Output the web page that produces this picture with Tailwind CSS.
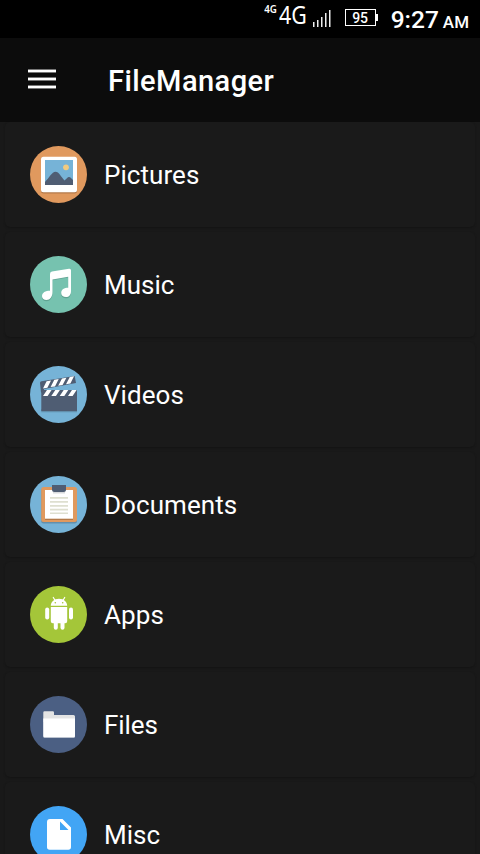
<!DOCTYPE html>
<html lang="en">
<head>
<meta charset="utf-8">
<title>FileManager</title>
<script src="https://cdn.jsdelivr.net/npm/@tailwindcss/browser@4"></script>
</head>
<body class="h-[854px] w-[480px] overflow-hidden bg-[#191919] font-[Roboto,sans-serif] text-white">
<div class="flex h-[854px] flex-col overflow-hidden">
  <div class="flex h-[38px] shrink-0 justify-end bg-black pr-[11px]">
    <span class="mt-[1px] mr-[1px] origin-right scale-x-[0.85] text-[11.5px] leading-[16px] font-semibold whitespace-nowrap font-['Noto_Sans',sans-serif]">4G</span>
    <span class="mr-[6px] origin-right scale-x-[0.82] text-[26px] leading-[29px] whitespace-nowrap -ml-[5px] font-['Noto_Sans',sans-serif]">4G</span>
    <svg class="mt-[9px] mr-[14px] h-[18px] w-[18px]" viewBox="0 0 18 18" fill="#eee"><path d="M0 13h1.500v5H0zM4 11h1.500v7H4zM8 8h1.500v10H8zM12 4h1.500v14H12zM16 1h1.500v17H16z"/></svg>
    <div class="mt-[9px] flex h-[17px] w-[31px] items-center justify-center border border-white pt-px text-[14px] leading-none font-medium">95</div>
    <div class="mt-[14px] mr-[13px] h-[7px] w-[2px] bg-white"></div>
    <div class="flex items-baseline pt-[5px] leading-[30px] font-medium"><span class="text-[24.500px]">9:27</span><span class="ml-[4px] text-[17px]">AM</span></div>
  </div>
  <header class="flex h-[84px] shrink-0 items-center bg-[#0c0c0c] pl-[28px]">
    <svg class="h-[22px] w-[28px]" viewBox="0 0 28 22"><path fill="#777" d="M0 0h28v4H0zM0 8h28v4H0zM0 16h28v4H0z"/><path fill="#fff" d="M0 1h28v2H0zM0 9h28v2H0zM0 17h28v2H0z"/></svg>
    <h1 class="ml-[52px] pt-[2px] text-[29px] leading-[34px] font-medium tracking-[0.45px]">FileManager</h1>
  </header>
  <main class="flex flex-col gap-[5px] px-[5px] text-[26px] leading-[30px]">
    <section class="flex h-[105px] shrink-0 items-center rounded-[5px] bg-[#1a1a1a] pl-[25px] shadow-[0_1px_2px_#141414]">
      <svg class="h-[57px] w-[57px]" viewBox="0 0 57 57"><circle cx="28.5" cy="28.5" r="28.5" fill="#e0995e"/><rect x="11" y="12" width="36" height="35.5" rx="2.5" fill="#b37a4b"/><rect x="11" y="10.7" width="36" height="35.5" rx="2.5" fill="#fff"/><path fill="#76b3d7" d="M15 14h28v25H15z"/><circle cx="36" cy="21.3" r="2.9" fill="#f0ca80"/><path fill="#4f5d73" d="M15 36c4-4 7-10.200 10.500-10.200S31 31 34.500 34.500C36.500 33 37.500 31 39 31s2.500 1.500 4 3v5H15z"/></svg>
      <span class="ml-[17px] tracking-[0.05px]">Pictures</span>
    </section>
    <section class="flex h-[105px] shrink-0 items-center rounded-[5px] bg-[#1a1a1a] pl-[25px] shadow-[0_1px_2px_#141414]">
      <svg class="h-[57px] w-[57px]" viewBox="0 0 57 57"><circle cx="28.500" cy="28.500" r="28.500" fill="#76c2af"/><path fill="#60a392" transform="translate(0 1.300)" d="M20 18q0-2 2-2.400l17-2.900q2-.3 2 1.500v21c0 3.500-2 5.800-5 5.800-2.700 0-4.800-1.500-4.800-4 0-3.500 3-5.200 7-5.200V20.300L22.500 23v13c0 4.500-2.500 8-6 8-2.500 0-4.500-1.500-4.500-3.800 0-3.700 3.500-5.500 8-5.500z"/><path fill="#fff" d="M20 18q0-2 2-2.400l17-2.900q2-.3 2 1.500v21c0 3.500-2 5.800-5 5.800-2.700 0-4.800-1.500-4.800-4 0-3.500 3-5.200 7-5.200V20.800L22.500 23.500v12.500c0 4.500-2.500 8-6 8-2.500 0-4.500-1.500-4.500-3.800 0-3.700 3.500-5.500 8-5.500z"/></svg>
      <span class="ml-[17px]">Music</span>
    </section>
    <section class="flex h-[105px] shrink-0 items-center rounded-[5px] bg-[#1a1a1a] pl-[25px] shadow-[0_1px_2px_#141414]">
      <svg class="h-[57px] w-[57px]" viewBox="0 0 57 57"><circle cx="28.500" cy="28.500" r="28.500" fill="#76b3d7"/><path fill="#628fac" d="M11.300 43H47v3.300H11.300z"/><path fill="#4f5d73" d="M11.300 24H47v21H11.300zM10 17q0-1.500 1.500-1.800L44.700 10l1.300 6.900-32 6.100v2l-3 1.500z"/><path fill="#fff" d="M13 22.500L16.600 15.200 21 14.500 17.400 21.800zM20.600 21.100L24.300 13.800 28.700 13.100 25 20.400zM28.200 19.700L32 12.400 36.400 11.700 32.600 19zM36 18.200L39.800 11 44 10.300 40.400 17.500zM13 30l4-6h4.600l-4 6zM21.300 30l4-6h4.600l-4 6zM29.700 30l4-6h4.600l-4 6zM38 30l4-6h4.600l-4 6z"/></svg>
      <span class="ml-[17px] tracking-[0.05px]">Videos</span>
    </section>
    <section class="flex h-[105px] shrink-0 items-center rounded-[5px] bg-[#1a1a1a] pl-[25px] shadow-[0_1px_2px_#141414]">
      <svg class="h-[57px] w-[57px]" viewBox="0 0 57 57"><circle cx="28.500" cy="28.500" r="28.500" fill="#76b3d7"/><rect x="11.200" y="12.500" width="35.800" height="35" rx="2.500" fill="#628fac"/><rect x="11.200" y="10.900" width="35.800" height="35" rx="2.500" fill="#e0995e"/><path fill="#b37a4b" d="M15 17h28v27H15z"/><path fill="#fff" d="M15 14h28v28.700H15z"/><path fill="#dedfd0" d="M20 21h18v1.700H20zM20 25h18v1.700H20zM20 29h18v1.700H20zM20 32.800h18v1.700H20zM20 36.400h18v1.700H20z"/><path fill="#d8dadd" d="M23 14h12v3.500H23z"/><path fill="#4f5d73" d="M22 9h14v4.500q0 2.500-2.500 2.500h-9Q22 16 22 13.500z"/></svg>
      <span class="ml-[17px] tracking-[0.05px]">Documents</span>
    </section>
    <section class="flex h-[105px] shrink-0 items-center rounded-[5px] bg-[#1a1a1a] pl-[25px] shadow-[0_1px_2px_#141414]">
      <svg class="h-[57px] w-[57px]" viewBox="0 0 57 57"><circle cx="28.500" cy="28.500" r="28.500" fill="#a4c639"/><g fill="#fff"><path d="M20.800 19.700c0-3.500 3-7 8.200-7s8.200 3.500 8.200 7zM20.800 21h16.400v14.300q0 2-2 2H22.800q-2 0-2-2z"/><rect x="15.200" y="21.500" width="4" height="12" rx="2"/><rect x="39" y="21.500" width="4" height="12" rx="2"/><rect x="23.800" y="33" width="4" height="10.800" rx="2"/><rect x="30.500" y="33" width="4" height="10.800" rx="2"/></g><path d="M23.300 11.500l2 3.300M34.700 11.500l-2 3.300" stroke="#fff" stroke-width="1.200" stroke-linecap="round"/><circle cx="25.300" cy="16.700" r=".8" fill="#a4c639"/><circle cx="32.700" cy="16.700" r=".8" fill="#a4c639"/></svg>
      <span class="ml-[17px] tracking-[0.1px]">Apps</span>
    </section>
    <section class="flex h-[105px] shrink-0 items-center rounded-[5px] bg-[#1a1a1a] pl-[25px] shadow-[0_1px_2px_#141414]">
      <svg class="h-[57px] w-[57px]" viewBox="0 0 57 57"><circle cx="28.500" cy="28.500" r="28.500" fill="#4b5f83"/><path fill="#e4e4e4" d="M13.300 16.500q0-1.200 1.200-1.200h8.300q1.200 0 1.200 1.200V19h19.500q1.500 0 1.500 1.500V26H13.300z"/><rect x="13.300" y="23" width="31.700" height="19" rx="1.200" fill="#a5afc1"/><path fill="#fff" d="M13.300 22.500H45V40q0 1.300-1.300 1.300H14.600q-1.300 0-1.300-1.300z"/></svg>
      <span class="ml-[17px] tracking-[-0.1px]">Files</span>
    </section>
    <section class="flex h-[105px] shrink-0 items-center rounded-[5px] bg-[#1a1a1a] pl-[25px] shadow-[0_1px_2px_#141414]">
      <svg class="h-[57px] w-[57px]" viewBox="0 0 57 57"><circle cx="28.500" cy="28.500" r="28.500" fill="#42a5f5"/><path fill="#fff" fill-rule="evenodd" d="M20 13h12.500L41 21.500V41q0 2.700-2.700 2.700H19.700Q17 43.700 17 41V16q0-3 3-3zM30 15.500V24h8.500z"/></svg>
      <span class="ml-[17px]">Misc</span>
    </section>
  </main>
</div>
</body>
</html>
